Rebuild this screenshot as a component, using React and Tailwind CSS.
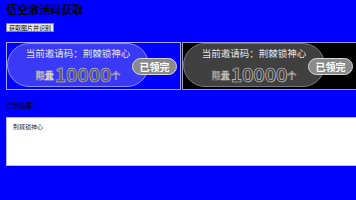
const cjk = "font-['Noto_Sans_CJK_SC','Noto_Sans',sans-serif]";

function InviteImage({ dark }) {
  return (
    <div
      className={`relative h-[48px] w-[175px] shrink-0 border ${
        dark ? "border-[#9a9ac8] bg-black" : "border-[#a8a8f0] bg-transparent"
      }`}
    >
      <div
        className={`flex h-[44px] w-[142px] flex-col items-center rounded-full border ${
          dark ? "border-[#7a7a7a] bg-[#404040]" : "border-[#8c8cff] bg-[#3a3af6]"
        }`}
      >
        <p className="mt-[4px] text-[9.5px] leading-[11px] text-[#e4e4e4]">
          当前邀请码：荆棘锁神心
        </p>
        <div className="mt-[5px] flex h-[18px] items-end">
          <span
            className={`mb-[1px] text-[9px] font-bold leading-[10px] ${
              dark ? "text-[#3a3a3a] [-webkit-text-stroke:0.4px_#cfcfcf]" : "text-[#4a4a4a] [-webkit-text-stroke:0.4px_#e8e8e8]"
            }`}
          >
            限量
          </span>
          <span
            className={`ml-[1px] text-[19.5px] font-bold leading-[16px] tracking-[-0.2px] ${
              dark ? "text-[#444] [-webkit-text-stroke:0.6px_#d0d0d0]" : "text-[#5e5e5e] [-webkit-text-stroke:0.4px_#d8d8d8]"
            }`}
          >
            10000
          </span>
          <span className="mb-[1px] text-[9px] font-bold leading-[10px] text-[#555] [-webkit-text-stroke:0.4px_#ddd]">
            个
          </span>
        </div>
      </div>
      <div className="absolute left-[125px] top-[15px] flex h-[17px] w-[45px] items-center justify-center rounded-full border border-[#d8d8d8] bg-[#8a8a8a] text-[10px] font-bold text-white">
        已领完
      </div>
    </div>
  );
}

export default function App() {
  return (
    <div className={`min-h-[200px] w-full overflow-hidden bg-[#0000ff] pl-[6px] pt-[3px] ${cjk}`}>
      <h1 className="text-[11px] font-bold leading-[12px] text-black">悟空激活码获取</h1>
      <button
        type="button"
        className="mt-[8px] flex h-[9px] items-center border border-[#888] bg-[#efefef] px-[2px] text-[6px] leading-none text-black"
      >
        获取图片并识别
      </button>
      <div className="mt-[10px] flex gap-[1px]">
        <InviteImage />
        <InviteImage dark />
      </div>
      <p className="mt-[11px] text-[6.5px] leading-[8px] text-black">识别结果:</p>
      <textarea
        readOnly
        defaultValue="荆棘锁神心"
        className="mt-[8px] block h-[49px] w-[352px] resize-none border border-[#b8b8ff] bg-white px-[6px] pt-[5px] text-[6px] leading-[8px] text-[#333] outline-none"
      />
    </div>
  );
}
